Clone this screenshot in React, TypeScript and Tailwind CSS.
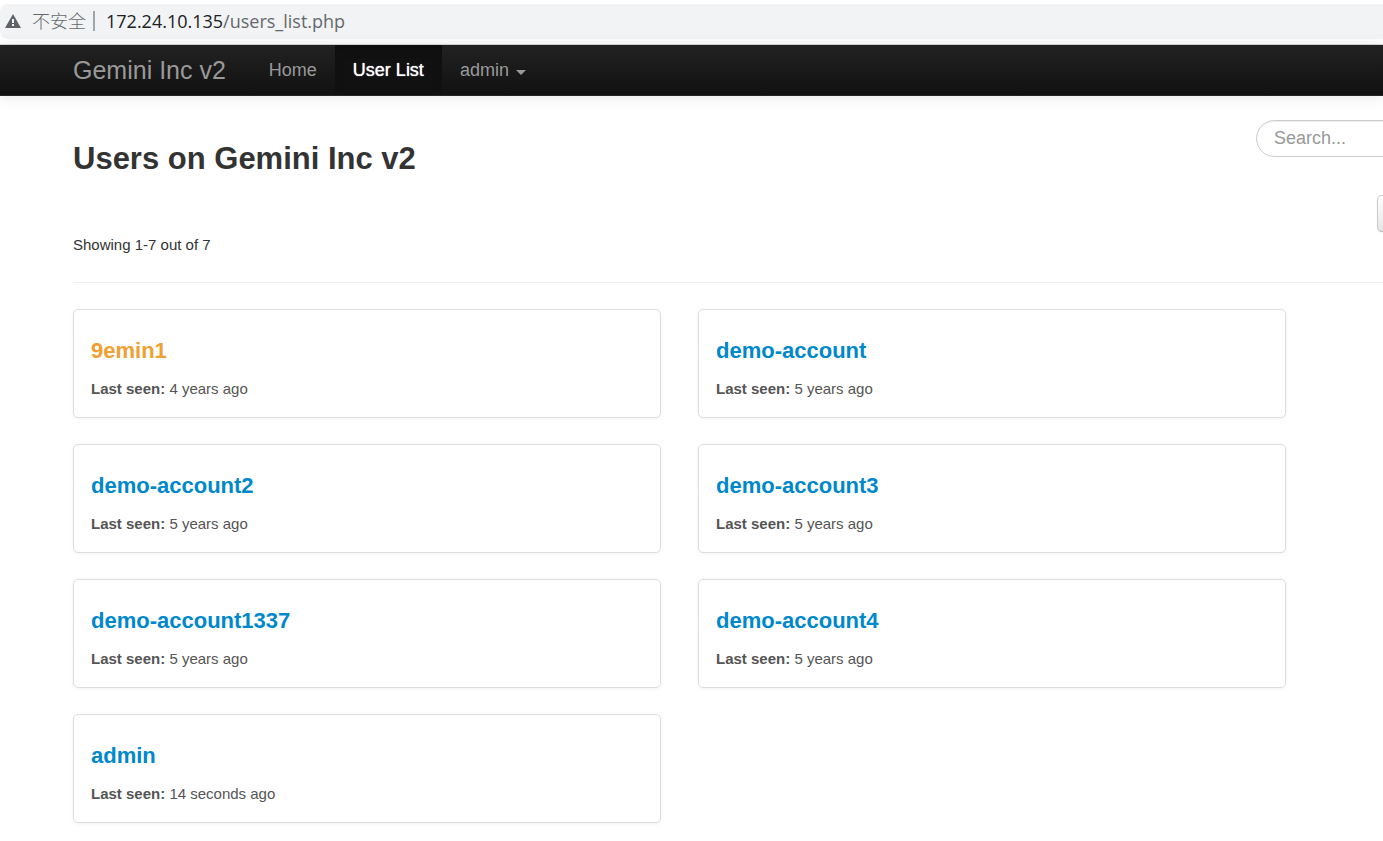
type User = {
  name: string;
  lastSeen: string;
  highlighted?: boolean;
};

const users: User[] = [
  { name: '9emin1', lastSeen: '4 years ago', highlighted: true },
  { name: 'demo-account', lastSeen: '5 years ago' },
  { name: 'demo-account2', lastSeen: '5 years ago' },
  { name: 'demo-account3', lastSeen: '5 years ago' },
  { name: 'demo-account1337', lastSeen: '5 years ago' },
  { name: 'demo-account4', lastSeen: '5 years ago' },
  { name: 'admin', lastSeen: '14 seconds ago' },
];

function AddressBar() {
  return (
    <div className="border-b border-[#d5d9dc] bg-white pt-1 pb-[5px]">
      <div className="flex h-[35px] items-center rounded-l-lg bg-[#f1f3f4] pb-0.5 pl-[5px] font-['Open_Sans','Noto_Sans_CJK_SC',sans-serif] text-[18px] leading-[26px] text-[#65696e]">
        <svg width="16" height="14" viewBox="0 0 16 14" aria-hidden="true">
          <path d="M8 0 16 14H0Z" fill="#5f6368" />
          <path d="M7 5h2v4H7zM7 10h2v2H7z" fill="#f1f3f4" />
        </svg>
        <span className="ml-[11px] font-light">不安全</span>
        <span className="mx-[7px] h-5 w-0.5 bg-[#a3a6a9]" />
        <span className="ml-1">
          <span className="text-[#202124]">172.24.10.135</span>/users_list.php
        </span>
      </div>
    </div>
  );
}

function Navbar() {
  return (
    <nav className="relative flex h-[51px] items-stretch border-b border-[#252525] bg-linear-to-b from-[#222] to-[#111] pl-[73px] text-[18px] leading-[26px] text-[#999] shadow-[0_1px_13px_rgba(0,0,0,0.1)]">
      <a href="#" className="mr-[25px] flex items-center text-[25px]">
        Gemini Inc v2
      </a>
      <a href="#" className="flex items-center px-[18px]">
        Home
      </a>
      <a
        href="#"
        className="flex items-center bg-[#111] px-[18px] text-white shadow-[inset_0_4px_10px_rgba(0,0,0,0.125)] [text-shadow:0_0_1px_#fff]"
      >
        User List
      </a>
      <button type="button" className="flex items-center px-[18px]">
        admin
        <span className="mt-1 ml-[7px] border-x-5 border-t-5 border-x-transparent border-t-[#999]" />
      </button>
    </nav>
  );
}

function UserCard({ name, lastSeen, highlighted }: User) {
  return (
    <li className="rounded-[5px] border border-[#ddd] px-[17px] pt-7 pb-[15px] shadow-[0_1px_4px_rgba(0,0,0,0.055)]">
      <h3 className="text-[22px] leading-[26px] font-bold">
        <a href="#" className={highlighted ? 'text-[#f0a030]' : 'text-[#0088cc]'}>
          {name}
        </a>
      </h3>
      <p className="mt-3 text-[15px] leading-[26px] text-[#555]">
        <strong>Last seen:</strong> {lastSeen}
      </p>
    </li>
  );
}

export default function App() {
  return (
    <div className="min-h-screen overflow-x-hidden bg-white font-['Liberation_Sans',Arial,sans-serif] text-[#333]">
      <AddressBar />
      <Navbar />

      <main className="pt-6 pl-[73px]">
        <header className="flex items-start justify-between">
          <div>
            <h1 className="mt-[13px] text-[31px] leading-[52px] font-bold">Users on Gemini Inc v2</h1>
            <p className="mt-[47px] text-[15px] leading-[26px]">Showing 1-7 out of 7</p>
          </div>

          {/* the search column runs past the right edge of the window */}
          <form className="-mr-[133px] flex w-[260px] flex-col items-end">
            <input
              type="search"
              aria-label="Search"
              placeholder="Search..."
              className="h-[37px] w-full rounded-full border border-[#ccc] px-[17px] text-[18px] leading-[26px] shadow-[inset_0_1px_1px_rgba(0,0,0,0.075)] placeholder:text-[#999]"
            />
            <button
              type="button"
              aria-label="Options"
              className="mt-[38px] h-[37px] w-[139px] rounded-[5px] border border-[#ccc] border-b-[#b3b3b3] bg-linear-to-b from-white to-[#e6e6e6] shadow-[0_1px_2px_rgba(0,0,0,0.05)]"
            />
          </form>
        </header>

        <hr className="mt-6 mb-[26px] border-[#eee]" />

        <ul className="mr-[97px] grid grid-cols-2 gap-x-[37px] gap-y-[26px]">
          {users.map((user) => (
            <UserCard key={user.name} {...user} />
          ))}
        </ul>
      </main>
    </div>
  );
}
